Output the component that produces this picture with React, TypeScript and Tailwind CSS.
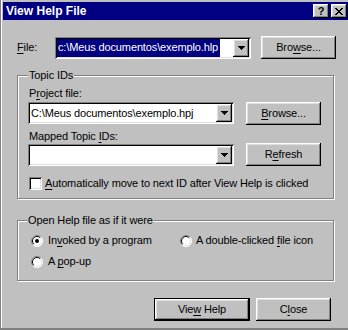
import React from 'react';

const raised =
  'bg-[#c0c0c0] shadow-[inset_-1px_-1px_0_#000,inset_1px_1px_0_#fff,inset_-2px_-2px_0_#808080,inset_2px_2px_0_#dfdfdf]';
const sunken =
  'bg-white shadow-[inset_1px_1px_0_#808080,inset_-1px_-1px_0_#fff,inset_2px_2px_0_#000,inset_-2px_-2px_0_#dfdfdf]';
const etched = 'border border-[#808080] shadow-[inset_1px_1px_0_#fff,1px_1px_0_#fff]';

const U = ({ children }: { children: React.ReactNode }) => (
  <span className="underline decoration-1 underline-offset-[2px]">{children}</span>
);

const Arrow = () => (
  <svg width="7" height="4" viewBox="0 0 7 4" shapeRendering="crispEdges">
    <rect x="0" y="0" width="7" height="1" fill="#000" />
    <rect x="1" y="1" width="5" height="1" fill="#000" />
    <rect x="2" y="2" width="3" height="1" fill="#000" />
    <rect x="3" y="3" width="1" height="1" fill="#000" />
  </svg>
);

const Combo = ({ width, children }: { width: string; children?: React.ReactNode }) => (
  <div className={`${width} h-[22px] ${sunken} flex items-stretch p-[2px]`}>
    <div className="flex-1 flex items-stretch overflow-hidden">{children}</div>
    <div className={`w-[16px] ${raised} flex items-center justify-center`}>
      <Arrow />
    </div>
  </div>
);

const Button = ({ width, children, main }: { width: string; children: React.ReactNode; main?: boolean }) =>
  main ? (
    <div className={`${width} h-[23px] border border-black flex`}>
      <div className={`flex-1 ${raised} flex items-center justify-center`}>
        <span>{children}</span>
      </div>
    </div>
  ) : (
    <div className={`${width} h-[23px] ${raised} flex items-center justify-center`}>
      <span>{children}</span>
    </div>
  );

const Radio = ({ on }: { on?: boolean }) => (
  <svg width="12" height="12" viewBox="0 0 12 12">
    <circle cx="6" cy="6" r="5.5" fill="#fff" />
    <path d="M9.9 2.1 A5.5 5.5 0 0 0 2.1 9.9" stroke="#808080" fill="none" />
    <path d="M2.1 9.9 A5.5 5.5 0 0 0 9.9 2.1" stroke="#fff" fill="none" />
    <path d="M9.2 2.8 A4.5 4.5 0 0 0 2.8 9.2" stroke="#000" fill="none" />
    <path d="M2.8 9.2 A4.5 4.5 0 0 0 9.2 2.8" stroke="#dfdfdf" fill="none" />
    {on && <circle cx="6" cy="6" r="2" fill="#000" />}
  </svg>
);

export default function App() {
  return (
    <div className="w-[348px] h-[330px] overflow-hidden bg-[#c0c0c0] border-l border-[#808080] border-b-2 font-['Liberation_Sans',Arial,sans-serif] text-[11px] tracking-[-0.13px] text-black leading-[13px]">
      <div className="h-full border-l border-white pl-[1px] pt-[2px] flex flex-col">
        {/* title bar */}
        <div className="h-[18px] bg-[#000080] flex items-center pl-[3px] pr-[1px]">
          <span className="flex-1 text-white font-bold text-[12px] tracking-normal">View Help File</span>
          <div className={`w-[16px] h-[14px] ${raised} flex items-center justify-center font-bold text-[11px] leading-none tracking-normal`}>
            ?
          </div>
          <div className={`w-[16px] h-[14px] ml-[2px] ${raised} flex items-center justify-center`}>
            <svg width="8" height="7" viewBox="0 0 8 7" shapeRendering="crispEdges">
              <path fill="#000" d="M0 0h2v1H0zM6 0h2v1H6zM1 1h2v1H1zM5 1h2v1H5zM2 2h4v1H2zM3 3h2v1H3zM2 4h4v1H2zM1 5h2v1H1zM5 5h2v1H5zM0 6h2v1H0zM6 6h2v1H6z" />
            </svg>
          </div>
        </div>

        <div className="pl-[14px] flex flex-col">
          {/* file row */}
          <div className="mt-[16px] h-[23px] flex items-center">
            <span className="w-[38px]">
              <U>F</U>ile:
            </span>
            <Combo width="w-[196px]">
              <span className="flex items-center bg-[#000080] text-white pl-[1px] pr-[2px]">
                {'c:\\Meus documentos\\exemplo.hlp'}
              </span>
            </Combo>
            <div className="ml-[10px]">
              <Button width="w-[75px]">
                Bro<U>w</U>se...
              </Button>
            </div>
          </div>

          {/* Topic IDs */}
          <div className={`relative mt-[16px] w-[317px] h-[124px] ${etched} pl-[10px] pt-[11px] flex flex-col`}>
            <span className="absolute left-[10px] top-[-7px] bg-[#c0c0c0] px-[1px]">Topic IDs</span>
            <span className="ml-[1px]">
              P<U>r</U>oject file:
            </span>
            <div className="mt-[1px] h-[24px] flex items-center">
              <Combo width="w-[206px]">
                <span className="flex items-center pl-[1px]">{'C:\\Meus documentos\\exemplo.hpj'}</span>
              </Combo>
              <div className="ml-[12px]">
                <Button width="w-[75px]">
                  <U>B</U>rowse...
                </Button>
              </div>
            </div>
            <span className="ml-[1px] mt-[5px]">
              Mapped Topic <U>I</U>Ds:
            </span>
            <div className="mt-[0px] h-[23px] flex items-center">
              <Combo width="w-[206px]" />
              <div className="ml-[12px]">
                <Button width="w-[75px]">
                  R<U>e</U>fresh
                </Button>
              </div>
            </div>
            <div className="mt-[11px] flex items-center">
              <div className={`w-[13px] h-[13px] ml-[1px] ${sunken}`} />
              <span className="ml-[3px]">
                <U>A</U>utomatically move to next ID after View Help is clicked
              </span>
            </div>
          </div>

          {/* Open Help file as */}
          <div className={`relative mt-[21px] w-[317px] h-[61px] ${etched} pl-[13px] pt-[13px] flex flex-col gap-[8px]`}>
            <span className="absolute left-[9px] top-[-7px] bg-[#c0c0c0] px-[1px]">Open Help file as if it were</span>
            <div className="flex items-center">
              <div className="w-[149px] flex items-center">
                <Radio on />
                <span className="ml-[5px]">
                  In<U>v</U>oked by a program
                </span>
              </div>
              <div className="flex items-center">
                <Radio />
                <span className="ml-[4px]">
                  A double-clicked <U>f</U>ile icon
                </span>
              </div>
            </div>
            <div className="flex items-center">
              <Radio />
              <span className="ml-[5px]">
                A <U>p</U>op-up
              </span>
            </div>
          </div>

          {/* bottom buttons */}
          <div className="mt-[17px] flex pl-[137px] gap-[6px]">
            <Button width="w-[96px]" main>
              Vie<U>w</U> Help
            </Button>
            <Button width="w-[75px]">
              C<U>l</U>ose
            </Button>
          </div>
        </div>
      </div>
    </div>
  );
}
